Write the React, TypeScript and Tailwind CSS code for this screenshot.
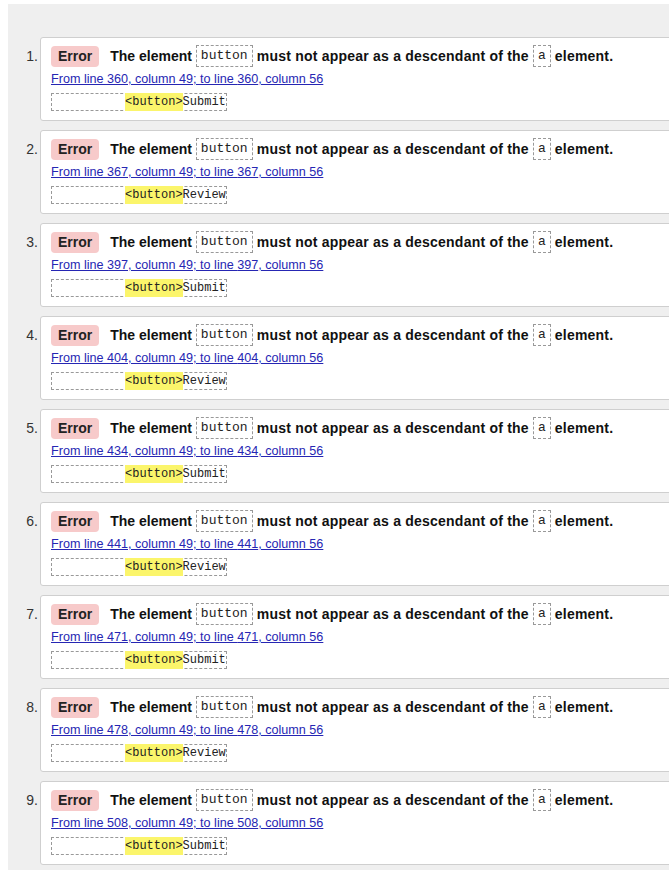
import React from 'react';

interface Issue {
  line: number;
  label: string;
}

const issues: Issue[] = [
  { line: 360, label: 'Submit' },
  { line: 367, label: 'Review' },
  { line: 397, label: 'Submit' },
  { line: 404, label: 'Review' },
  { line: 434, label: 'Submit' },
  { line: 441, label: 'Review' },
  { line: 471, label: 'Submit' },
  { line: 478, label: 'Review' },
  { line: 508, label: 'Submit' },
];

const mono = "font-['Liberation_Mono','DejaVu_Sans_Mono',monospace]";

function Code({ children }: { children: React.ReactNode }) {
  return (
    <code
      className={`${mono} inline-flex h-[22px] items-center border border-dashed border-[#999] px-[4px] text-[13px] font-normal text-[#222]`}
    >
      {children}
    </code>
  );
}

function IssueCard({ issue, index }: { issue: Issue; index: number }) {
  return (
    <li className="mb-[9px] flex">
      <span className="w-[30px] shrink-0 pt-[10px] text-right text-[14px] leading-[18px] text-[#333]">
        {index + 1}.
      </span>
      <div className="ml-[2px] w-[660px] shrink-0 rounded-[3px] border border-[#cfcfcf] bg-white px-[10px] pt-[7px] pb-[9px]">
        <p className="flex h-[22px] items-center whitespace-pre text-[14px] font-bold text-[#111]">
          <span className="mr-[11px] flex h-[21px] items-center rounded-[4px] bg-[#f7caca] px-[7px] text-[#222]">
            Error
          </span>
          <span>The element </span>
          <Code>button</Code>
          <span className="tracking-[0.22px]"> must not appear as a descendant of the </span>
          <Code>a</Code>
          <span className="tracking-[0.2px]"> element.</span>
        </p>
        <div className="flex h-[25px] items-center">
          <a href="#" className="text-[12.6px] text-[#2626b3] underline">
            From line {issue.line}, column 49; to line {issue.line}, column 56
          </a>
        </div>
        <div
          className={`${mono} mt-[1px] flex h-[18px] w-fit items-center border border-dashed border-[#999] pl-[73px] text-[12px] text-[#222]`}
        >
          <span className="bg-[#fbf56b]">&lt;button&gt;</span>
          <span>{issue.label}</span>
        </div>
      </div>
    </li>
  );
}

export default function App() {
  return (
    <div className="h-[870px] w-full overflow-hidden bg-white pt-[4px] pl-[8px] font-['Liberation_Sans',Arial,sans-serif]">
      <div className="h-full bg-[#efefef] pt-[33px]">
        <ol>
          {issues.map((issue, i) => (
            <IssueCard key={i} issue={issue} index={i} />
          ))}
        </ol>
      </div>
    </div>
  );
}
